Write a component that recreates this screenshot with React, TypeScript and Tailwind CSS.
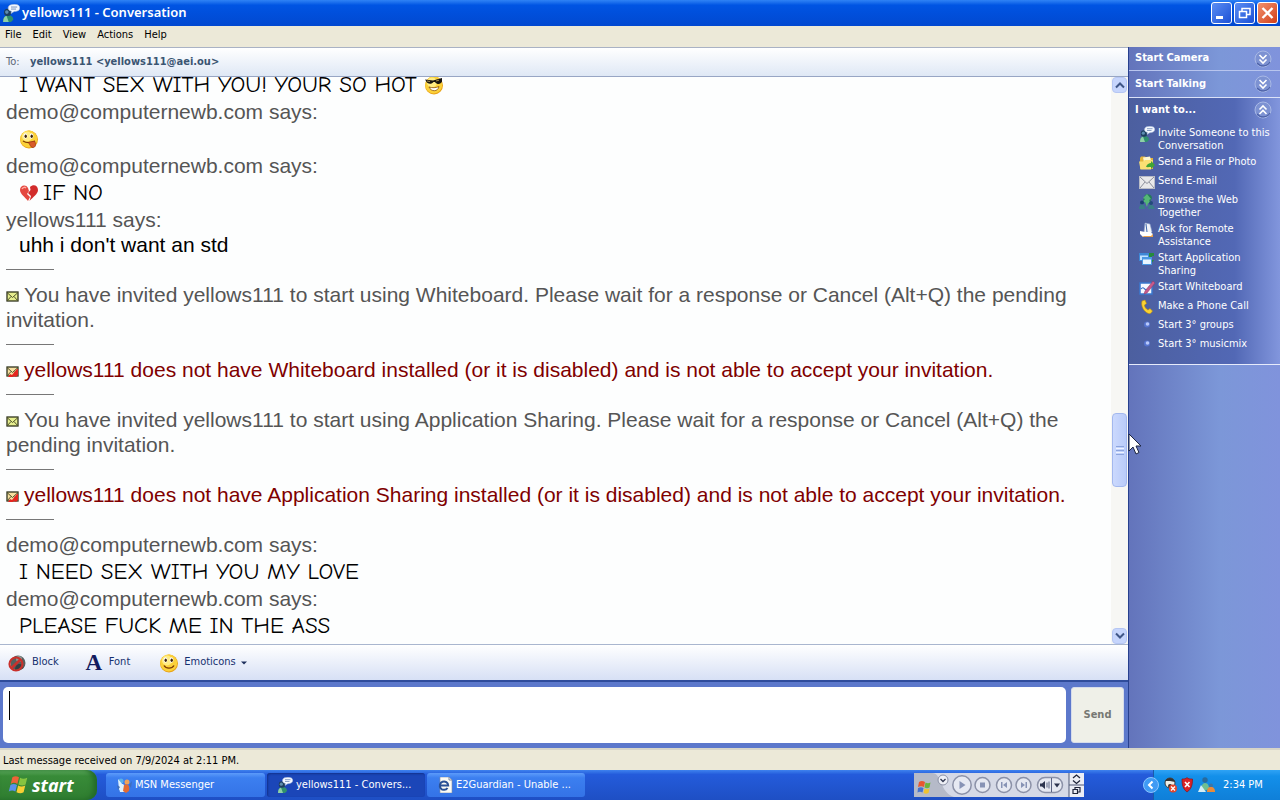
import { useState } from "react";
import type { ReactNode } from "react";

const ui = "font-['Tahoma','DejaVu_Sans_Condensed','DejaVu_Sans',sans-serif]";

function BuddyIcon({ size = 16 }: { size?: number }) {
  return (
    <svg width={size} height={size} viewBox="0 0 16 16" className="shrink-0">
      <path d="M1 16c0-4 1.500-6 4.500-6s4.500 1.500 4.500 4l-2 2z" fill="#2f8f6d" />
      <path d="M1 16c0-3 1-5 3-5.500L6 16z" fill="#8fd0a8" />
      <circle cx="5" cy="7.500" r="3.200" fill="#1d3f5e" />
      <circle cx="4.300" cy="7.200" r="1.600" fill="#5d8db0" />
      <path d="M5.500 3C6 1 8 .3 11 .3c3 0 4.800 1 4.800 3 0 2.400-2 3.400-5 3.400L8 8.500l.4-2C6.300 6 5.200 4.700 5.500 3z" fill="#f4f8ff" stroke="#9fb4d6" strokeWidth=".5" />
      <path d="M8 2.700h5.500M8 4.500h4.500" stroke="#6d89b5" strokeWidth=".8" />
    </svg>
  )
}

function FolderIcon() {
  return (
    <svg width="16" height="16" viewBox="0 0 16 16" className="shrink-0">
      <path d="M1 3l1-1.500h4L7.500 3H14v11H1z" fill="#e3b43c" />
      <path d="M4 2.500l7-1 2 8-7 2z" fill="#fdf7d2" />
      <path d="M0 6.500h4l2-1.500h8l-2 9.500H1.500z" fill="#fbdf73" />
      <path d="M7 12c1-3 3-4 5-4V6l4 4-4 4v-2c-2 0-3 .3-5 0z" fill="#3fa535" />
    </svg>
  )
}

function MailIcon() {
  return (
    <svg width="16" height="16" viewBox="0 0 16 16" className="shrink-0">
      <rect x=".5" y="2.500" width="15" height="12" fill="#e9e9ea" stroke="#b9bcc6" />
      <path d="M1 3l7 6.500L15 3M1 14l5-6M15 14l-5-6" fill="none" stroke="#8d909c" />
    </svg>
  )
}

function WebIcon() {
  return (
    <svg width="16" height="16" viewBox="0 0 16 16" className="shrink-0">
      <path d="M6 2c3-2 7 0 7 3l-2 4-4 1-3-3z" fill="#237b58" />
      <path d="M8 1l4 5-2 1 3 4-4-1-1 4-2-5-3 1 3-4-2-1z" fill="#55b777" />
      <circle cx="3" cy="9.500" r="2" fill="#1b3f72" />
      <circle cx="12" cy="10" r="2" fill="#244a7c" />
      <path d="M0 16c0-3 1-4.500 3-4.500S6 13 6 16zM9 16c0-3 1-4 3-4s3.500 1 3.500 4z" fill="#3a7f87" />
    </svg>
  )
}

function HandIcon() {
  return (
    <svg width="16" height="16" viewBox="0 0 16 16" className="shrink-0">
      <path d="M6 1l5 1 2 8-3 3-5-3z" fill="#f1f4fa" stroke="#8ba0c8" strokeWidth=".6" />
      <path d="M7 2l1 8" stroke="#3f68ad" />
      <path d="M1 9l5 1 5 0 3 2-2 3H4l-3-3z" fill="#fff" />
      <path d="M3 14h9l2-2v3H5z" fill="#e8a14c" />
    </svg>
  )
}

function ShareIcon() {
  return (
    <svg width="16" height="16" viewBox="0 0 16 16" className="shrink-0">
      <path d="M9 2h6v3h-2v4h2l-3 4-3-4z" fill="#258a3d" />
      <rect x=".5" y="2.500" width="9" height="7" fill="#bfe2ff" stroke="#3e88d6" />
      <path d="M.5 3.500h9" stroke="#3e88d6" strokeWidth="2" />
      <rect x="3.500" y="6.500" width="9" height="7" fill="#e9f6ff" stroke="#4a98e4" />
      <path d="M3.500 7.500h9" stroke="#4a98e4" strokeWidth="2" />
    </svg>
  )
}

function WhiteboardIcon() {
  return (
    <svg width="16" height="16" viewBox="0 0 16 16" className="shrink-0">
      <rect x="1" y="3" width="12" height="11" fill="#f6f9ff" stroke="#3a78cf" strokeWidth="1.500" />
      <path d="M2 9c3-4 4 3 6 0" fill="none" stroke="#2f6bc6" strokeWidth="1.200" />
      <path d="M14 1l2 2-8 10-3 1 1-3z" fill="#c65a8b" stroke="#8d3462" strokeWidth=".5" />
    </svg>
  )
}

function PhoneIcon() {
  return (
    <svg width="16" height="16" viewBox="0 0 16 16" className="shrink-0">
      <path d="M3 2l3-1 1.500 3.500-2 1.500c0 2 1.500 4 3.500 5l2-1.500L13.500 12c-1 2-2.500 3-4 2.500C5 13 1.500 7 3 2z" fill="#fbd332" stroke="#b98b14" strokeWidth=".6" />
    </svg>
  )
}

function DotIcon() {
  return (
    <svg width="16" height="16" viewBox="0 0 16 16" className="shrink-0">
      <circle cx="8" cy="6.500" r="3" fill="#5674cf" />
      <circle cx="8.500" cy="6" r="1.800" fill="#b9c9fb" />
    </svg>
  )
}

function Smiley({ kind, size = 20 }: { kind: "smile" | "cool" | "tongue"; size?: number }) {
  return (
    <svg width={size} height={size} viewBox="0 0 20 20" className="inline-block shrink-0 align-[-3px]">
      <circle cx="10" cy="10.500" r="9" fill="#e9a317" />
      <circle cx="9.700" cy="10" r="8.500" fill="#fbd13a" />
      <circle cx="8" cy="7.500" r="5" fill="#ffec83" />
      {kind === "cool" ? (
        <>
          <path d="M1 4.500l8 1 9-2.500v3.500c-1 3-5 3.500-7 .500H9.500c-2 3-6.500 2-7.500-1z" fill="#171410" />
          <path d="M3 6l3 .5M12 6l3-.8" stroke="#a58e4d" />
          <path d="M5 12c2 5 9 5 10-.500-3 1.500-7 1.500-10 .5z" fill="#fff" stroke="#8a5104" strokeWidth=".8" />
        </>
      ) : (
        <>
          <ellipse cx="6.500" cy="7" rx="1.900" ry="2.700" fill="#fff" />
          <ellipse cx="12.500" cy="7" rx="1.900" ry="2.700" fill="#fff" />
          <ellipse cx="6.700" cy="7.300" rx="1.200" ry="1.800" fill="#3e2206" />
          <ellipse cx="12.700" cy="7.300" rx="1.200" ry="1.800" fill="#3e2206" />
          {kind === "tongue" ? (
            <>
              <path d="M4 12c3 2 8 2 12 0" fill="none" stroke="#7d3b04" strokeWidth="1.200" />
              <path d="M9.500 13.300l6-1.200c2 3 1 6.500-1.500 6.500s-3-3-4.500-5.300z" fill="#d85a28" stroke="#963312" strokeWidth=".7" />
            </>
          ) : (
            <path d="M5 12.500c2 3.500 8 3.500 10 0" fill="none" stroke="#7d3b04" strokeWidth="1.400" />
          )}
        </>
      )}
    </svg>
  )
}

function BrokenHeart() {
  return (
    <svg width="20" height="20" viewBox="0 0 20 20" className="mr-1 inline-block align-[-3px]">
      <path d="M9 5C7 1 1 2 1 7c0 4 5 7 8 11l2-4-3-3 2-3z" fill="#e4473f" />
      <path d="M11 4c3-3 8-2 8 3 0 4-5 7-8.500 11l1.500-5-3-3 2.500-3z" fill="#d22c2b" />
      <path d="M3 6c1-2 3-2 4-1" fill="none" stroke="#ffaaa0" strokeWidth="1.500" />
    </svg>
  )
}

function Invite({ failed = false }: { failed?: boolean }) {
  return (
    <svg width="13" height="12" viewBox="0 0 13 12" className="mr-[5px] inline-block align-[-1px]">
      <rect x="1" y="1" width="11" height="9" fill={failed ? "#f7dfa0" : "#e6ee8e"} stroke="#30331d" strokeWidth="1.300" />
      <path d="M1 1.500L6.500 6.500 12 1.500M1 10l4-4.500M12 10L8 5.500" fill="none" stroke="#50552c" />
      {failed && <path d="M2 11l2-3 2 1 5-6h1v6l-2 2-2-1-1 1z" fill="#e52620" />}
    </svg>
  )
}

function WindowsFlag({ size = 20 }: { size?: number }) {
  return (
    <svg width={size} height={size} viewBox="0 0 20 20" className="shrink-0">
      <path d="M4 3c2-1.500 4-1.300 6 0L8.500 9c-2-1.300-4-1.400-6 0z" fill="#ee6338" />
      <path d="M11 3.500c2 1.200 4 1.200 6.500 0L16 9.500c-2 1.200-4 1.200-6.500 0z" fill="#86c440" />
      <path d="M2.200 10c2-1.400 4-1.300 6 0l-1.500 6c-2-1.200-4-1.200-6 0z" fill="#5a91ea" />
      <path d="M9.200 10.500c2 1.200 4 1.200 6.500 0l-1.500 6c-2 1.200-4 1.200-6.500 0z" fill="#f8cf34" />
    </svg>
  )
}

function Chevrons({ up = false }: { up?: boolean }) {
  return (
    <svg width="18" height="18" viewBox="0 0 18 18" className="shrink-0">
      <circle cx="9" cy="9" r="8" fill="#7d92d2" stroke="#a9b9e6" />
      <path d="M3 13A8 8 0 0 0 16 12" fill="none" stroke="#4d62a9" strokeWidth="1.200" />
      <path d={up ? "M5.500 8.500L9 5l3.500 3.500M5.500 13L9 9.500l3.500 3.500" : "M5.500 5L9 8.500 12.500 5M5.500 9.500L9 13l3.500-3.500"} fill="none" stroke="#fff" strokeWidth="1.600" />
    </svg>
  )
}

function ScrollButton({ up = false }: { up?: boolean }) {
  return (
    <button aria-label={up ? "Scroll up" : "Scroll down"} className="flex h-4 w-full shrink-0 items-center justify-center rounded-sm border border-[#b5c6f3] bg-[#c6d5fc]">
      <svg width="10" height="8" viewBox="0 0 10 8">
        <path d={up ? "M1 6.500L5 2.500 9 6.500" : "M1 1.500L5 5.500 9 1.500"} fill="none" stroke="#3f5687" strokeWidth="2" />
      </svg>
    </button>
  )
}

function Says({ name }: { name: string }) {
  return <p className="text-[#555]">{name} says:</p>
}

function Comic({ children }: { children: ReactNode }) {
  return <p className="h-[29px] pl-[13px] font-['Comic_Sans_MS','Comic_Neue','Noto_Sans',sans-serif] text-[23px] leading-[29px] text-black">{children}</p>
}

function Rule() {
  return (
    <div className="flex h-[25px] items-center">
      <hr className="w-12 border-[#777]" />
    </div>
  )
}

const menus = ["File", "Edit", "View", "Actions", "Help"];

const actions = [
  { label: "Invite Someone to this Conversation", icon: <BuddyIcon /> },
  { label: "Send a File or Photo", icon: <FolderIcon /> },
  { label: "Send E-mail", icon: <MailIcon /> },
  { label: "Browse the Web Together", icon: <WebIcon /> },
  { label: "Ask for Remote Assistance", icon: <HandIcon /> },
  { label: "Start Application Sharing", icon: <ShareIcon /> },
  { label: "Start Whiteboard", icon: <WhiteboardIcon /> },
  { label: "Make a Phone Call", icon: <PhoneIcon /> },
  { label: "Start 3° groups", icon: <DotIcon /> },
  { label: "Start 3° musicmix", icon: <DotIcon /> },
];

function TitleBar() {
  return (
    <header className="flex h-[26px] shrink-0 items-center bg-linear-to-b from-[#2f83f5] via-[#0054e3] via-20% to-[#0148d0] pr-0.5 pl-[2px]">
      <BuddyIcon size={18} />
      <h1 className="ml-0.5 flex-1 font-['Trebuchet_MS','Noto_Sans',sans-serif] text-[13px] font-semibold text-white">yellows111 - Conversation</h1>
      <div className="flex gap-[2px]">
        <button aria-label="Minimize" className="h-[22px] w-[21px] rounded-[3px] border border-white bg-linear-to-br from-[#5b8df3] to-[#1c4fd6]">
          <svg width="19" height="20" viewBox="0 0 19 20"><path d="M4 14.500h7" stroke="#fff" strokeWidth="3" /></svg>
        </button>
        <button aria-label="Restore" className="h-[22px] w-[21px] rounded-[3px] border border-white bg-linear-to-br from-[#5b8df3] to-[#1c4fd6]">
          <svg width="19" height="20" viewBox="0 0 19 20">
            <path d="M7 8V5.500h8v6h-3" fill="none" stroke="#fff" strokeWidth="1.500" />
            <rect x="4.500" y="8.500" width="7" height="6" fill="none" stroke="#fff" strokeWidth="1.500" />
          </svg>
        </button>
        <button aria-label="Close" className="h-[22px] w-[21px] rounded-[3px] border border-white bg-linear-to-br from-[#f0906c] to-[#d23c10]">
          <svg width="19" height="20" viewBox="0 0 19 20"><path d="M4.500 5l10 10M14.500 5l-10 10" stroke="#fff" strokeWidth="2.400" /></svg>
        </button>
      </div>
    </header>
  )
}

function Sidebar() {
  return (
    <aside className="flex w-[152px] shrink-0 flex-col border-l border-[#27408f] bg-linear-to-r from-[#6374bb] via-[#7c97d8] via-60% to-[#8093dc] text-[11px] text-white">
      <button className="flex h-6 items-center justify-between border-b border-[#b8c5ee] pr-2 pl-1.5 text-left font-bold">Start Camera<Chevrons /></button>
      <button className="flex h-[27px] items-center justify-between border-b border-[#dbe2f8] pr-2 pl-1.5 text-left font-bold">Start Talking<Chevrons /></button>
      <div className="h-[267px] border-b border-[#e6ebfb] bg-linear-to-r from-[#4c5f9f] via-[#5268b5] via-70% to-[#8296dd]">
        <button className="flex h-6 w-full items-center justify-between pr-2 pl-1.5 text-left font-bold">I want to...<Chevrons up /></button>
        <ul className="mt-1 flex flex-col gap-[3px] pl-2.5 leading-[13px]">
          {actions.map(item => (
            <li key={item.label}>
              <a href="#" className="flex min-h-4 gap-[3px]">{item.icon}<span className="w-[115px]">{item.label}</span></a>
            </li>
          ))}
        </ul>
      </div>
    </aside>
  )
}

function Chat() {
  return (
    <div className="flex min-h-0 flex-1 bg-[#fdfefe]">
      <div className="flex min-w-0 flex-1 flex-col justify-end overflow-hidden pb-1 pl-1.5 font-['Arial','Liberation_Sans',sans-serif] text-[21px] leading-[25px] *:shrink-0">
        <Comic>I WANT SEX WITH YOU! YOUR SO HOT <Smiley kind="cool" /></Comic>
        <Says name="demo@computernewb.com" />
        <Comic><Smiley kind="tongue" /></Comic>
        <Says name="demo@computernewb.com" />
        <Comic><BrokenHeart />IF NO</Comic>
        <Says name="yellows111" />
        <p className="pl-[13px] text-black">uhh i don't want an std</p>
        <Rule />
        <p className="text-[#555]"><Invite />You have invited yellows111 to start using Whiteboard. Please wait for a response or Cancel (Alt+Q) the pending invitation.</p>
        <Rule />
        <p className="text-[#800000]"><Invite failed />yellows111 does not have Whiteboard installed (or it is disabled) and is not able to accept your invitation.</p>
        <Rule />
        <p className="text-[#555]"><Invite />You have invited yellows111 to start using Application Sharing. Please wait for a response or Cancel (Alt+Q) the pending invitation.</p>
        <Rule />
        <p className="text-[#800000]"><Invite failed />yellows111 does not have Application Sharing installed (or it is disabled) and is not able to accept your invitation.</p>
        <Rule />
        <Says name="demo@computernewb.com" />
        <Comic>I NEED SEX WITH YOU MY LOVE</Comic>
        <Says name="demo@computernewb.com" />
        <Comic>PLEASE FUCK ME IN THE ASS</Comic>
      </div>
      <div className="flex w-[17px] shrink-0 flex-col bg-[#f7f7f4] px-px">
        <ScrollButton up />
        <div className="grow-[321]" />
        <div className="flex h-[74px] flex-col items-center justify-center gap-px rounded-sm border border-[#a3b8ee] bg-linear-to-r from-[#cbd9fd] to-[#b9cbf9]">
          <span className="h-px w-2 bg-[#8ca4dd]" />
          <span className="h-px w-2 bg-[#eef3ff]" />
          <span className="h-px w-2 bg-[#8ca4dd]" />
          <span className="h-px w-2 bg-[#eef3ff]" />
          <span className="h-px w-2 bg-[#8ca4dd]" />
        </div>
        <div className="grow-[141]" />
        <ScrollButton />
      </div>
    </div>
  )
}

function Player() {
  return (
    <div className="flex h-6 w-[170px] shrink-0 items-center bg-[#d5d9e6]">
      <svg width="170" height="24" viewBox="0 0 170 24">
        <path d="M0 0h18c10 0 8 20 22 24H0z" fill="#b5bac8" />
        <path d="M5 9c2-1.500 4-1.300 6 0l-1 5c-2-1-4-1-6 0z" fill="#e8572f" />
        <path d="M11.500 9.500c2 1 3 1 5 0l-1 5c-2 1-3 1-5 0z" fill="#6cb43a" />
        <path d="M4 15c2-1 4-1 5.500 0l-1 4.500c-2-1-3-1-5 0z" fill="#4573cf" />
        <path d="M10.500 15.500c2 1 3 1 5 0l-1 4.500c-2 1-3 1-5 0z" fill="#f0c32f" />
        <circle cx="29" cy="7" r="5" fill="#eef0f6" stroke="#8a90a5" />
        <path d="M26.500 6l2.500 2.500L31.500 6" fill="none" stroke="#333a52" strokeWidth="1.300" />
        <g fill="#e6e9f2" stroke="#8b91a7" strokeWidth="1.500">
          <circle cx="48" cy="12" r="9.200" />
          <circle cx="68.500" cy="12" r="7.500" />
          <circle cx="90" cy="12" r="7.500" />
          <circle cx="109.500" cy="12" r="7.500" />
          <rect x="123.500" y="4.500" width="25" height="15" rx="7.500" />
        </g>
        <g fill="#8793b5">
          <path d="M45.500 8l6 4-6 4z" />
          <path d="M66 9.500h5v5h-5z" />
          <path d="M87 9h1.500v6H87zM93 9v6l-4-3z" />
          <path d="M107 9l4 3-4 3zM111.500 9h1.500v6h-1.500z" />
        </g>
        <path d="M126 10.500h2l3-2.500v8l-3-2.500h-2zM140 10.500h6l-3 4z" fill="#2c344e" />
        <path d="M133 9.500v5M135 8.500v7M137.500 5v14" stroke="#596281" />
        <path d="M155 0h15v24h-15z" fill="#eceef5" />
        <path d="M155 0v24M155 12h15" stroke="#4c5674" />
        <path d="M159 5l3.500-3L166 5M159 7.500l3.500 3 3.500-3" fill="none" stroke="#20263a" strokeWidth="1.300" />
        <path d="M161 16v-1.500h5V19h-2M159 16.500h4.500v4H159z" fill="none" stroke="#20263a" strokeWidth="1.200" />
      </svg>
    </div>
  )
}

function TaskBar() {
  return (
    <footer className="flex h-[30px] shrink-0 items-center bg-linear-to-b from-[#3f82ee] via-[#245bdb] via-15% to-[#1e4fc4] text-[11px] text-white">
      <button className="flex h-full w-[97px] items-center gap-0.5 rounded-r-[10px] bg-linear-to-b from-[#62b062] via-[#388b38] via-20% to-[#2f7d30] pl-2 font-['Trebuchet_MS','Noto_Sans',sans-serif] text-[18px] font-bold italic shadow-[inset_-4px_0_5px_#236b28]">
        <WindowsFlag size={22} />start
      </button>
      <nav className="ml-[9px] flex flex-1 gap-[2px]">
        <button className="flex h-[24px] w-[159px] items-center gap-[3px] rounded-[3px] bg-linear-to-b from-[#5c9bfa] via-[#3c7ff0] via-20% to-[#3473e6] pl-2.5">
          <svg width="16" height="16" viewBox="0 0 16 16">
            <circle cx="5" cy="4" r="2.500" fill="#5ab0e8" />
            <circle cx="11" cy="5" r="2.500" fill="#f0a35a" />
            <path d="M2 2l5 6-4 5zM5 7c3-1 5 3 4 8H4c-1-3-1-6 1-8z" fill="#dff1fc" />
            <path d="M8 8c4-2 6 1 5 6l-3 2-3-2z" fill="#e36b32" />
            <path d="M1 8l3 2-2 3zM13 8l3-4-1 7z" fill="#3f6fbc" />
          </svg>
          MSN Messenger
        </button>
        <button className="flex h-[24px] w-[158px] items-center gap-[3px] rounded-[3px] bg-[#1b46b8] pl-2.5 shadow-[inset_1px_1px_2px_#12328c]">
          <BuddyIcon />yellows111 - Convers...
        </button>
        <button className="flex h-[24px] w-[158px] items-center gap-[3px] rounded-[3px] bg-linear-to-b from-[#5c9bfa] via-[#3c7ff0] via-20% to-[#3473e6] pl-2.5">
          <svg width="16" height="16" viewBox="0 0 16 16">
            <path d="M3 0h9l3 3v13H3z" fill="#fbfbf5" stroke="#7f8aa1" strokeWidth=".6" />
            <path d="M3 8.500h8.200A4.200 4.200 0 1 0 10.500 11" fill="none" stroke="#2a5195" strokeWidth="2" />
            <path d="M12 0v3h3" fill="none" stroke="#7f8aa1" />
          </svg>
          E2Guardian - Unable ...
        </button>
      </nav>
      <Player />
      <div className="ml-[69px] flex h-full w-[127px] items-center bg-linear-to-b from-[#2ea3f5] via-[#1390ea] via-20% to-[#0f7fd8] shadow-[inset_1px_0_0_#1b5aa9]">
        <button aria-label="Show hidden icons" className="-ml-2.5 h-4 w-4 shrink-0">
          <svg width="16" height="16" viewBox="0 0 16 16">
            <circle cx="8" cy="8" r="7.500" fill="#3f9bf5" stroke="#8cc6ff" />
            <path d="M9.500 4.500L6 8l3.500 3.500" fill="none" stroke="#fff" strokeWidth="2" />
          </svg>
        </button>
        <svg width="52" height="16" viewBox="0 0 52 16" className="ml-1">
          <circle cx="7" cy="6" r="5" fill="#f0efe8" stroke="#3d3d3d" />
          <path d="M2 4c3-5 9-3 10 1L7 4z" fill="#333" />
          <circle cx="7" cy="9" r="2" fill="#333" />
          <circle cx="10" cy="11.500" r="4" fill="#e2452b" />
          <path d="M8 9.500l4 4M12 9.500l-4 4" stroke="#fff" strokeWidth="1.300" />
          <path d="M19 2c2 0 4 0 5-1.500C25 2 27 2 29.500 2c0 6-1 10-5.500 13-4-3-5-7-5-13z" fill="#d82327" stroke="#8b1215" strokeWidth=".7" />
          <path d="M22 5l4.500 5M26.500 5L22 10" stroke="#fff" strokeWidth="1.600" />
          <circle cx="42" cy="3" r="2.700" fill="#286a9c" />
          <path d="M38 15c0-5 1-9 4-9s4 3 4 6z" fill="#6fbf91" />
          <path d="M35 15l3-7 5 7z" fill="#d4edf5" />
          <circle cx="48" cy="8.500" r="2" fill="#3c75a5" />
          <path d="M44 15c0-3 1-5 4-5s4 2 4 5z" fill="#e98b3a" />
        </svg>
        <time className="ml-2">2:34 PM</time>
      </div>
    </footer>
  )
}

function App() {
  const [message, setMessage] = useState<string>('');

  return (
    <div className={`${ui} relative flex h-screen flex-col overflow-hidden text-[11px]`}>
      <TitleBar />
      <nav className="flex h-[21px] shrink-0 items-center gap-[11px] bg-[#ece9d8] pb-0.5 pl-[5px] text-black">
        {menus.map(item => <button key={item}>{item}</button>)}
      </nav>

      <div className="flex min-h-0 flex-1">
        <main className="flex min-w-0 flex-1 flex-col">
          <div className="flex h-[30px] shrink-0 items-center border-t border-b border-t-[#a9b2c4] border-b-[#98a6c4] bg-linear-to-b from-white to-[#dfe8f5] pl-1.5 text-[#3b5572]">
            <span className="w-6 text-[#5c6677]">To:</span>
            <span className="font-bold">yellows111 &lt;yellows111@aei.ou&gt;</span>
          </div>
          <Chat />
          <div className="flex h-[38px] shrink-0 items-center border-t border-b-2 border-t-[#a9b6cf] border-b-[#2f4c9b] bg-linear-to-b from-white to-[#d7e0f5] pl-2 text-[#16306f]">
            <button className="flex items-center gap-1.5">
              <svg width="18" height="18" viewBox="0 0 18 18">
                <circle cx="10" cy="9" r="7.500" fill="#56605f" />
                <circle cx="11" cy="5" r="3" fill="#8c9a98" />
                <path d="M7 16c0-4 2-6 4.500-6s4 2 4 4z" fill="#333f42" />
                <circle cx="8" cy="10" r="6.500" fill="none" stroke="#c9302c" strokeWidth="2.200" />
                <path d="M3.500 14l9-8.500" stroke="#c9302c" strokeWidth="2.500" />
              </svg>
              Block
            </button>
            <button className="ml-[26px] flex items-center gap-1.5">
              <span className="w-[18px] text-center font-['Times_New_Roman','Liberation_Serif',serif] text-[23px] leading-6 font-bold text-[#131b5e]">A</span>
              Font
            </button>
            <button className="ml-[29px] flex items-center gap-[5px]">
              <Smiley kind="smile" />
              Emoticons
              <svg width="6" height="4" viewBox="0 0 6 4"><path d="M0 .5h6L3 3.500z" fill="#1d2f5c" /></svg>
            </button>
          </div>
          <form className="flex h-[66px] shrink-0 gap-[5px] bg-[#5c78cb] pt-[5px] pr-1 pb-[5px] pl-[3px]" onSubmit={e => e.preventDefault()}>
            <div className="flex min-w-0 flex-1 rounded-[5px] bg-white py-1 pl-1.5">
              <span className="h-[29px] w-px bg-black" />
              <textarea aria-label="Message" className="min-w-0 flex-1 resize-none text-[21px] outline-none" value={message} onChange={e => setMessage(e.target.value)} />
            </div>
            <button type="submit" className="w-[53px] rounded-[3px] border border-[#d6dceb] bg-[#eff0e8] font-bold text-[#777873]">Send</button>
          </form>
        </main>
        <Sidebar />
      </div>

      <div className="flex h-[22px] shrink-0 items-center border-t-2 border-[#d7d5c8] bg-[#ece9d8] pt-0.5 pl-[3px] text-black">Last message received on 7/9/2024 at 2:11 PM.</div>
      <TaskBar />

      <svg width="13" height="22" viewBox="0 0 13 22" className="pointer-events-none absolute top-[433px] left-[1128px]">
        <path d="M1 1v17l4-4 3 7 3-1.500-3-6.500h5z" fill="#fff" stroke="#1d2540" />
      </svg>
    </div>
  )
}

export default App
